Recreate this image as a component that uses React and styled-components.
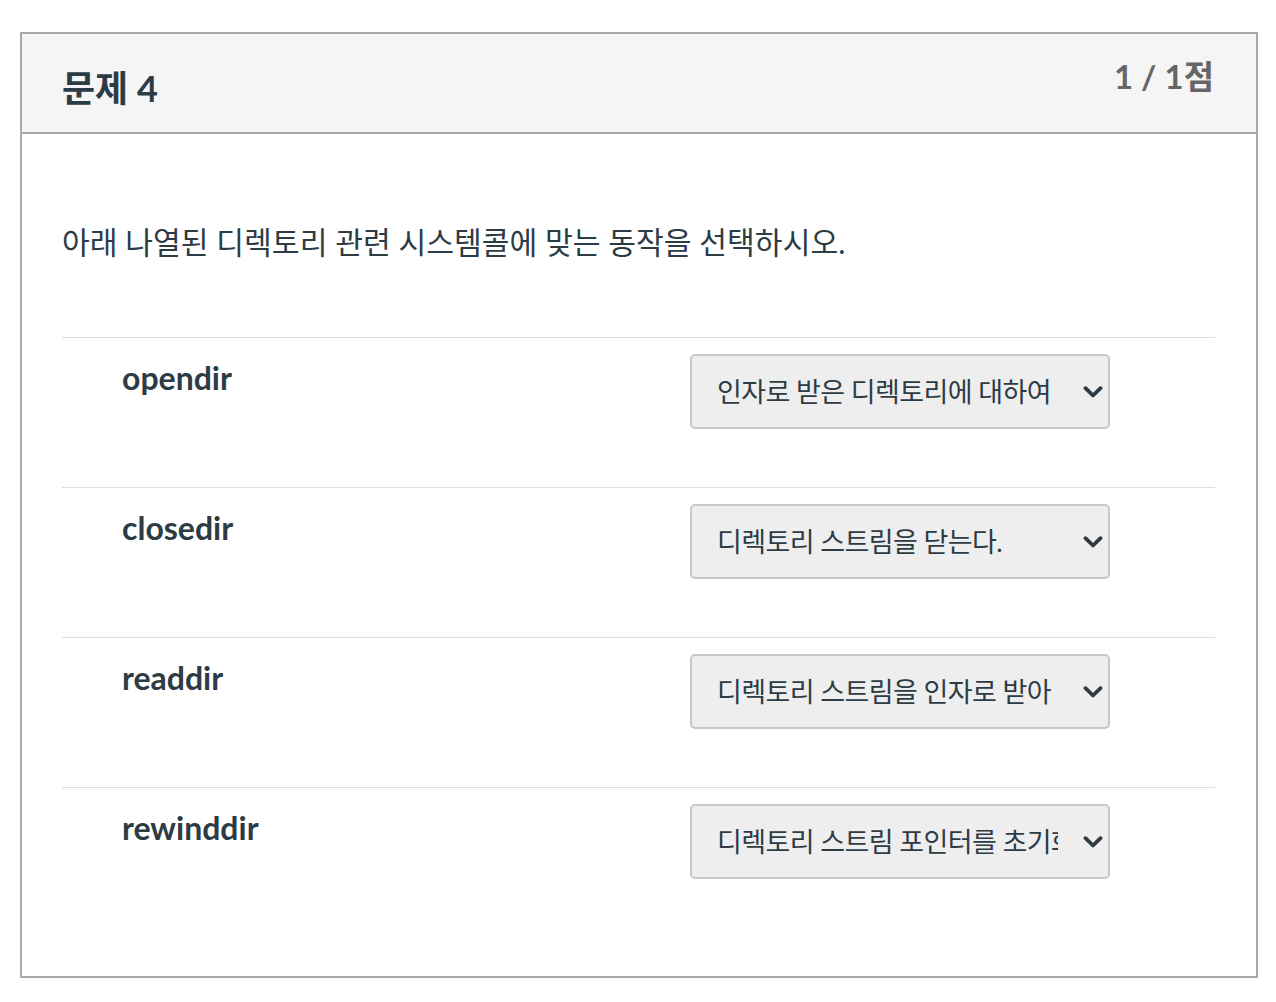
import React from "react";
import styled, { createGlobalStyle } from "styled-components";

const Global = createGlobalStyle`
  html, body { margin: 0; padding: 0; background: #fff; }
  body { font-family: Lato, "Noto Sans CJK KR", sans-serif; color: #2d3b45; }
  * { box-sizing: border-box; }
`;

const Page = styled.div`
  padding: 32px 18px 24px 20px;
`;

const Card = styled.section`
  width: 1238px;
  border: 2px solid #aaaaaa;
  background: #fff;
`;

const Header = styled.header`
  height: 100px;
  background: #f5f5f5;
  border-bottom: 2px solid #aaaaaa;
  display: flex;
  justify-content: space-between;
  align-items: flex-start;
  padding: 0 42px 0 40px;
`;

const Title = styled.h2`
  margin: 0;
  padding-top: 32px;
  font-size: 36px;
  line-height: 44px;
  font-weight: 700;
  color: #2d3b45;
`;

const Points = styled.div`
  padding-top: 22px;
  font-size: 33px;
  line-height: 40px;
  font-weight: 700;
  color: #666666;
`;

const Body = styled.div`
  padding: 87px 41px 39px 40px;
`;

const Question = styled.p`
  margin: 0 0 74px;
  font-size: 30.2px;
  line-height: 42px;
  color: #2d3b45;
`;

const Row = styled.div`
  display: grid;
  grid-template-columns: 628px 420px;
  align-items: start;
  border-top: 1px solid #dddddd;
  padding: 16px 0 58px;
`;

const Label = styled.div`
  padding: 3px 0 0 60px;
  font-size: 32px;
  line-height: 42px;
  font-weight: 700;
  color: #2d3b45;
`;

const SelectWrap = styled.div`
  position: relative;
  width: 420px;
  height: 75px;
`;

const Select = styled.select`
  appearance: none;
  -webkit-appearance: none;
  width: 100%;
  height: 100%;
  margin: 0;
  padding: 0 50px 0 25px;
  font-family: Lato, "Noto Sans CJK KR", sans-serif;
  font-size: 27px;
  letter-spacing: -0.6px;
  color: #2d3b45;
  background: #eeeeee;
  border: 2px solid #c8c8c8;
  border-radius: 5px;
  outline: none;
`;

const Chevron = styled.svg`
  position: absolute;
  right: 7px;
  top: 50%;
  width: 20px;
  height: 12px;
  margin-top: -6px;
  pointer-events: none;
`;

const items = [
  { name: "opendir", answer: "인자로 받은 디렉토리에 대하여 디렉토리 스트림을 연다." },
  { name: "closedir", answer: "디렉토리 스트림을 닫는다." },
  { name: "readdir", answer: "디렉토리 스트림을 인자로 받아 다음 디렉토리 항목을 읽는다." },
  { name: "rewinddir", answer: "디렉토리 스트림 포인터를 초기화한다." },
];

export default function App() {
  return (
    <>
      <Global />
      <Page>
        <Card>
          <Header>
            <Title>문제 4</Title>
            <Points>1 / 1점</Points>
          </Header>
          <Body>
            <Question>아래 나열된 디렉토리 관련 시스템콜에 맞는 동작을 선택하시오.</Question>
            {items.map((it) => (
              <Row key={it.name}>
                <Label>{it.name}</Label>
                <SelectWrap>
                  <Select defaultValue={it.answer}>
                    {items.map((o) => (
                      <option key={o.name} value={o.answer}>
                        {o.answer}
                      </option>
                    ))}
                  </Select>
                  <Chevron viewBox="0 0 20 12">
                    <path d="M2.5 2.2 L10 9.5 L17.5 2.2" fill="none" stroke="#2d3b45" strokeWidth="3.8" strokeLinecap="round" strokeLinejoin="round" />
                  </Chevron>
                </SelectWrap>
              </Row>
            ))}
          </Body>
        </Card>
      </Page>
    </>
  );
}
